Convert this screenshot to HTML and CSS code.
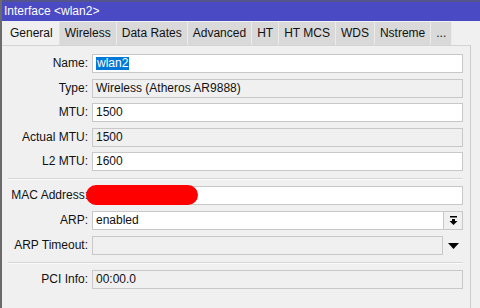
FILE: index.html
```html
<!DOCTYPE html>
<html lang="en">
<head>
    <meta charset="UTF-8">
    <meta name="viewport" content="width=device-width, initial-scale=1.0">
    <title>Interface &lt;wlan2&gt;</title>
    <link rel="stylesheet" href="styles.css">
</head>
<body>
    <div class="window">
        <div class="titlebar">Interface &lt;wlan2&gt;</div>
        <ul class="tabs">
            <li class="active">General</li>
            <li>Wireless</li>
            <li>Data Rates</li>
            <li>Advanced</li>
            <li>HT</li>
            <li>HT MCS</li>
            <li>WDS</li>
            <li>Nstreme</li>
            <li>...</li>
        </ul>
        <div class="panel">
            <div class="group">
                <div class="row"><label>Name:</label><div class="field"><span class="sel">wlan2</span></div></div>
                <div class="row"><label>Type:</label><div class="field ro">Wireless (Atheros AR9888)</div></div>
                <div class="row"><label>MTU:</label><div class="field">1500</div></div>
                <div class="row"><label>Actual MTU:</label><div class="field ro">1500</div></div>
                <div class="row"><label>L2 MTU:</label><div class="field">1600</div></div>
            </div>
            <div class="sep"></div>
            <div class="group wide">
                <div class="row mac"><label>MAC Address:</label><div class="field"></div><div class="blot"></div></div>
                <div class="row"><label>ARP:</label><div class="field">enabled</div>
                    <div class="btn"><svg width="9" height="9" viewBox="0 0 9 9"><rect x="1" y="0" width="7" height="1.5" fill="#000"/><rect x="3" y="3" width="3" height="2" fill="#000"/><polygon points="0.5,5 8.5,5 4.5,9" fill="#000"/></svg></div>
                </div>
                <div class="row"><label>ARP Timeout:</label><div class="field ro"></div>
                    <div class="drop"><svg width="11" height="6" viewBox="0 0 11 6"><polygon points="0,0 11,0 5.5,6" fill="#000"/></svg></div>
                </div>
            </div>
            <div class="sep"></div>
            <div class="group">
                <div class="row"><label>PCI Info:</label><div class="field ro">00:00.0</div></div>
            </div>
        </div>
    </div>
</body>
</html>
```

FILE: styles.css
```css
*{margin: 0; padding: 0; box-sizing: border-box;}
body{background: #f0f0f0; font-family: "Liberation Sans", Arial, sans-serif; font-size: 12px; color: #111;}
.window{height: 308px; border-left: 2px solid #6b6b6b; overflow: hidden;}
.titlebar{height: 21px; background: #4a4ac4; border-top: 2px solid #55558e; color: #fff; padding-left: 2px; line-height: 18px;}
.tabs{display: flex; list-style: none; margin-top: 1px; padding-left: 1px; height: 23px;}
.tabs>li{padding: 0 5px; background: #d9d9d9; border-right: 1px solid #ebebeb; line-height: 23px;}
.tabs>li.active{background: #f0f0f0; padding: 0 6px 0 7px; border-right: 1px solid #e2e2e2;}
.panel{width: 469px; height: 270px; border-top: 1px solid #d4d4d4; border-right: 1px solid #cbcbcb; padding: 8px 7px 0 0;}
.group{display: flex; flex-direction: column; gap: 5.5px;}
.group.wide{gap: 6px;}
.row{display: flex; height: 19px; position: relative;}
.row>label{width: 86px; margin-right: 4px; text-align: right; line-height: 19px;}
.field{flex: 1; border: 1px solid #c8c8c8; background: #fff; padding-left: 3px; line-height: 17px; white-space: nowrap;}
.field.ro{background: #f0f0f0;}
.sel{background: #0078d7; color: #fff; padding: 0 1px; display: inline-block; line-height: 13px;}
.sep{margin: 7px 0 6px 6px; border-top: 1px solid #d6d6d6; border-bottom: 1px solid #fbfbfb;}
.btn{width: 19px; border: 1px solid #c8c8c8; border-left: none; display: flex; align-items: center; justify-content: center; background: #f0f0f0;}
.drop{width: 20px; display: flex; align-items: center; justify-content: center;}
.blot{position: absolute; left: 84px; top: -1px; width: 112px; height: 20px; background: #ff0000; border-radius: 10px;}
```
